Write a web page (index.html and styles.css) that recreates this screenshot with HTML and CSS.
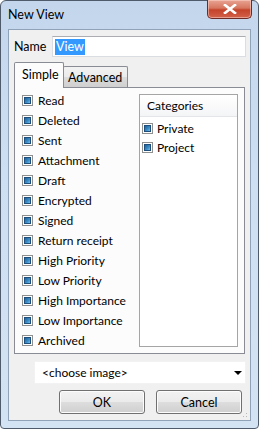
FILE: index.html
```html
<!DOCTYPE html>
<html>
<head>
<meta charset="utf-8">
<link rel="stylesheet" href="styles.css">
</head>
<body>
<div class="window">
  <div class="titlebar">
    <span class="title">New View</span>
    <div class="close"><svg width="14" height="10" viewBox="0 0 14 10"><path d="M2 1 L12 9 M12 1 L2 9" stroke="#fff" stroke-width="2.6" stroke-linecap="square"/></svg></div>
  </div>
  <div class="client">
    <div class="name-row">
      <span class="name-label">Name</span>
      <div class="name-input"><span class="sel">View</span></div>
    </div>
    <div class="tabs">
      <div class="tab active">Simple</div>
      <div class="tab">Advanced</div>
    </div>
    <div class="panel">
      <div class="checks">
        <div class="item"><span class="cb"><i></i></span>Read</div>
        <div class="item"><span class="cb"><i></i></span>Deleted</div>
        <div class="item"><span class="cb"><i></i></span>Sent</div>
        <div class="item"><span class="cb"><i></i></span>Attachment</div>
        <div class="item"><span class="cb"><i></i></span>Draft</div>
        <div class="item"><span class="cb"><i></i></span>Encrypted</div>
        <div class="item"><span class="cb"><i></i></span>Signed</div>
        <div class="item"><span class="cb"><i></i></span>Return receipt</div>
        <div class="item"><span class="cb"><i></i></span>High Priority</div>
        <div class="item"><span class="cb"><i></i></span>Low Priority</div>
        <div class="item"><span class="cb"><i></i></span>High Importance</div>
        <div class="item"><span class="cb"><i></i></span>Low Importance</div>
        <div class="item"><span class="cb"><i></i></span>Archived</div>
      </div>
      <div class="cats">
        <div class="cats-head">Categories</div>
        <div class="cat"><span class="cb"><i></i></span>Private</div>
        <div class="cat"><span class="cb"><i></i></span>Project</div>
      </div>
    </div>
    <div class="combo-row">
      <div class="combo"><span>&lt;choose image&gt;</span><span class="arrow"></span></div>
    </div>
    <div class="buttons">
      <div class="btn">OK</div>
      <div class="btn">Cancel</div>
    </div>
    <div class="grip"></div>
  </div>
</div>
</body>
</html>
```
FILE: styles.css
```css
* { box-sizing: border-box; }
html, body { margin: 0; padding: 0; }
body {
  width: 259px; height: 429px; overflow: hidden; background: #fff;
  font-family: "Lato", "Open Sans", sans-serif; font-size: 12px; color: #000;
}
.window {
  width: 259px; height: 429px;
  border: 1px solid #4f5b6b;
  border-radius: 6px 6px 4px 4px;
  background: linear-gradient(#c3d6ec, #cddff2 40%, #d4e3f3);
  display: flex; flex-direction: column;
  padding: 0 7px 7px 7px;
}
.titlebar {
  height: 28px; display: flex; align-items: flex-start; position: relative;
}
.title { padding-top: 6px; font-size: 12.5px; color: #000; }
.close {
  position: absolute; right: -1px; top: -1px;
  width: 45px; height: 19px;
  border: 1px solid #6e2a24; border-top: none;
  border-radius: 0 0 5px 5px;
  background: linear-gradient(#e8a493, #d6765f 45%, #c4432a 55%, #d2624a);
  display: flex; align-items: center; justify-content: center;
  box-shadow: inset 0 0 0 1px rgba(255,220,210,0.5);
}
.client {
  flex: 1; background: #f0f0f0;
  border: 1px solid #8fa2b8;
  display: flex; flex-direction: column;
  position: relative;
  padding: 0 4px 0 5px;
}
.name-row { display: flex; align-items: center; margin-top: 6px; height: 21px; }
.name-label { width: 38px; font-size: 12.5px; }
.name-input {
  flex: 1; height: 21px; background: #fff;
  border: 1px solid #dadee3; border-top-color: #abadb3;
  display: flex; align-items: center; padding-left: 2px; font-size: 12.5px;
}
.sel { background: #3399ff; color: #fff; padding: 0 1px; line-height: 16px; }
.tabs { display: flex; align-items: flex-end; margin-top: 5px; height: 25px; }
.tab {
  height: 21px; border: 1px solid #898c95; border-bottom: none;
  background: linear-gradient(#f2f2f2, #ebebeb 50%, #dddddd 50%, #cfcfcf);
  display: flex; align-items: center; margin-left: -1px;
  border-radius: 2px 2px 0 0; padding: 0 5px 0 4px; font-size: 12.5px;
}
.tab.active {
  background: #fcfcfc; padding: 0 7px 2px 7px; z-index: 2;
  margin-bottom: -1px; height: 26px; margin-left: 0; width: 50px;
}
.panel {
  width: 231px; height: 267px;
  border: 1px solid #898c95; background: #fcfcfc;
  display: flex; padding: 2px 0 0 7px;
}
.checks { width: 117px; display: flex; flex-direction: column; }
.item { height: 20px; display: flex; align-items: center; white-space: nowrap; }
.cb {
  width: 11px; height: 11px; border: 1px solid #8e8f8f; background: #fff;
  padding: 1px; margin-right: 5px; flex: none; display: flex;
}
.cb i {
  display: block; flex: 1; border: 1px solid #1f4e7a;
  background: linear-gradient(135deg, #1e5f96, #3d8fc9 60%, #79c0e8);
}
.cats {
  width: 99px; height: 253px; margin-top: 4px;
  border: 1px solid #a5a5a5; background: #fff;
}
.cats-head {
  height: 22px; padding-left: 7px; display: flex; align-items: center;
  background: linear-gradient(#ffffff, #f4f5f7); border-bottom: 1px solid #e3e5e8;
  margin-bottom: 2px;
}
.cat { height: 19px; display: flex; align-items: center; padding-left: 2px; }
.cat .cb { margin-right: 4px; }
.combo-row { display: flex; margin-top: 7px; padding-left: 20px; }
.combo {
  flex: 1; height: 23px; background: #fff; border: 1px solid #f2f2f2;
  display: flex; align-items: center; justify-content: space-between;
  padding: 0 3px 0 7px; font-size: 12px;
}
.arrow {
  width: 0; height: 0; border-left: 4px solid transparent; border-right: 4px solid transparent;
  border-top: 4px solid #000; margin-top: 1px;
}
.buttons { display: flex; gap: 11px; margin-top: 6px; padding-left: 45px; }
.btn {
  width: 86px; height: 24px; border: 1px solid #707070; border-radius: 3px;
  background: linear-gradient(#f2f2f2, #ebebeb 48%, #dddddd 52%, #cfcfcf);
  box-shadow: inset 0 0 0 1px #fcfcfc;
  display: flex; align-items: center; justify-content: center; font-size: 12.5px;
}
.grip {
  position: absolute; right: 1px; bottom: 1px; width: 10px; height: 10px;
  background-image: radial-gradient(circle, #b9b9b9 0.8px, transparent 1px);
  background-size: 3px 3px;
  clip-path: polygon(100% 0, 100% 100%, 0 100%);
}
```
